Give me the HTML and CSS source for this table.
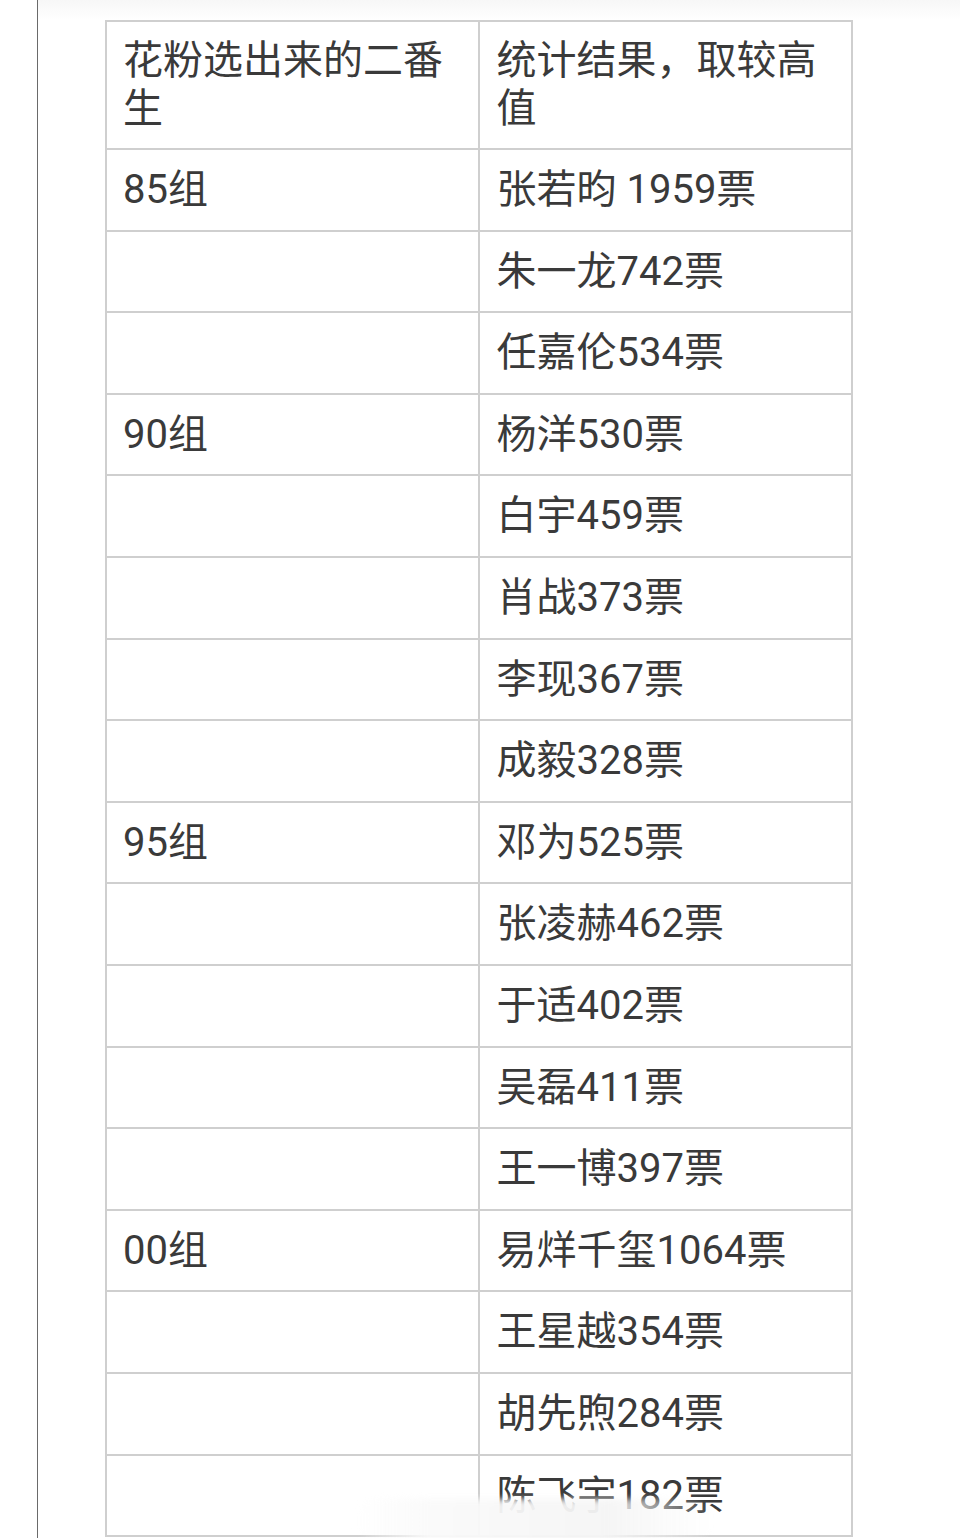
FILE: index.html
```html
<!DOCTYPE html>
<html lang="zh-CN">
<head>
<meta charset="utf-8">
<title>花粉选出来的二番生</title>
<link rel="stylesheet" href="styles.css">
</head>
<body>
<div class="frame">
  <div class="sheet">
    <table class="votes">
      <tr class="head">
        <td>花粉选出来的二番生</td>
        <td>统计结果，取较高值</td>
      </tr>
      <tr><td>85组</td><td>张若昀 1959票</td></tr>
      <tr><td></td><td>朱一龙742票</td></tr>
      <tr><td></td><td>任嘉伦534票</td></tr>
      <tr><td>90组</td><td>杨洋530票</td></tr>
      <tr><td></td><td>白宇459票</td></tr>
      <tr><td></td><td>肖战373票</td></tr>
      <tr><td></td><td>李现367票</td></tr>
      <tr><td></td><td>成毅328票</td></tr>
      <tr><td>95组</td><td>邓为525票</td></tr>
      <tr><td></td><td>张凌赫462票</td></tr>
      <tr><td></td><td>于适402票</td></tr>
      <tr><td></td><td>吴磊411票</td></tr>
      <tr><td></td><td>王一博397票</td></tr>
      <tr><td>00组</td><td>易烊千玺1064票</td></tr>
      <tr><td></td><td>王星越354票</td></tr>
      <tr><td></td><td>胡先煦284票</td></tr>
      <tr><td></td><td>陈飞宇182票</td></tr>
    </table>
    <div class="watermark"></div>
  </div>
</div>
</body>
</html>
```

FILE: styles.css
```css
html, body {
  margin: 0;
  padding: 0;
  background: #ffffff;
}

body {
  height: 1538px;
  overflow: hidden;
  font-family: Roboto, "Noto Sans CJK SC", sans-serif;
  color: #3a3a3a;
}

.frame {
  margin-left: 37px;
  border-left: 1px solid #6a6a6a;
  padding-left: 67px;
  padding-top: 20px;
  height: 1518px;
  background: linear-gradient(to bottom, #f7f7f7 0px, #ffffff 20px);
}

.sheet {
  position: relative;
  width: 748px;
}

.votes {
  width: 748px;
  border-collapse: collapse;
  table-layout: fixed;
  background: #ffffff;
}

.votes td {
  width: 50%;
  border: 2px solid #cfcfcf;
  font-size: 40px;
  line-height: 48px;
  padding: 16px 16px 15.6px 16px;
  vertical-align: middle;
  white-space: normal;
}

.votes td:nth-child(2) {
  padding-left: 17px;
}

.votes .head td {
  padding-top: 15px;
  padding-bottom: 15px;
}

.watermark {
  position: absolute;
  left: 250px;
  bottom: -6px;
  width: 360px;
  height: 44px;
  border-radius: 22px;
  background: linear-gradient(to right, rgba(255,255,255,0) 0%, rgba(250,250,250,0.95) 20%, rgba(245,245,245,0.95) 70%, rgba(255,255,255,0) 100%);
  filter: blur(3px);
}
```
